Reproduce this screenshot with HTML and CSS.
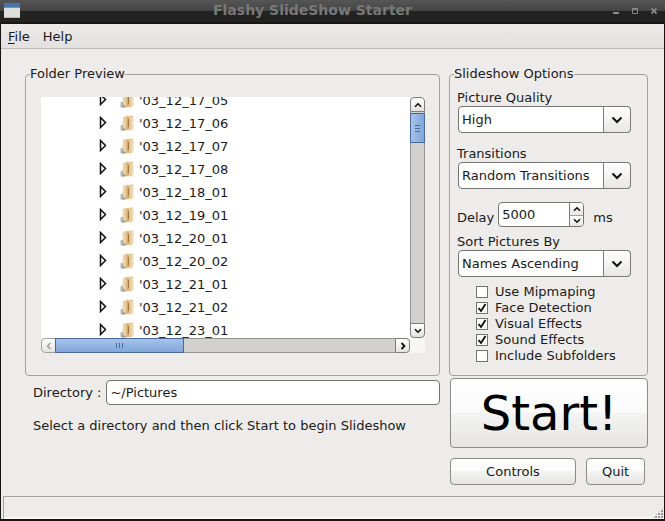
FILE: index.html
```html
<!DOCTYPE html>
<html lang="en">
<head>
<meta charset="utf-8">
<meta name="viewport" content="width=device-width, initial-scale=1">
<title>Flashy SlideShow Starter</title>
<link rel="stylesheet" href="styles.css">
</head>
<body>
<svg class="defs" aria-hidden="true">
  <defs>
    <linearGradient id="tan" x1="0" x2="1" y1="0" y2="0">
      <stop offset="0" stop-color="#f6e2ba"/><stop offset="1" stop-color="#dcb57a"/>
    </linearGradient>
    <linearGradient id="pale" x1="0" x2="1" y1="0" y2="0">
      <stop offset="0" stop-color="#d9ae6c"/><stop offset="1" stop-color="#f6e3bd"/>
    </linearGradient>
    <linearGradient id="steel" x1="0" x2="1" y1="0" y2="0">
      <stop offset="0" stop-color="#c4c4c2"/><stop offset="1" stop-color="#858583"/>
    </linearGradient>
    <symbol id="expander" viewBox="0 0 8 13"><path d="M1.500 1.500V11.500L6.500 6.500z" fill="#fff" stroke="#111" stroke-width="1.500"/></symbol>
    <symbol id="folder" viewBox="0 0 14 16">
      <path d="M7 1.500 12.500.5 13.200 1v12.500L11 15.200 7 14.500z" fill="url(#pale)" stroke="#dcc294" stroke-width=".4"/>
      <path d="M3 2.200 7.600 1v13.200L6.500 15.500 3 14z" fill="url(#tan)" stroke="#dcb981" stroke-width=".4"/>
      <path d="M7.800 3 9 4.500V11l-1.200 3z" fill="#9b7a48"/>
      <path d="M.5 10.200 2.600 9.500 3.400 13l2.600 1.400-2 1.300H1.500Q.4 15.500.4 14z" fill="url(#steel)"/>
    </symbol>
    <symbol id="chevron" viewBox="0 0 12 8"><path d="M1.500 1.500 6 6 10.500 1.500" fill="none" stroke="#111" stroke-width="2"/></symbol>
    <symbol id="down" viewBox="0 0 8 6"><path d="M1 1.200 4 4.200 7 1.200" fill="none" stroke="#111" stroke-width="1.600"/></symbol>
    <symbol id="up" viewBox="0 0 8 6"><path d="M1 4.800 4 1.800 7 4.800" fill="none" stroke="#111" stroke-width="1.600"/></symbol>
    <symbol id="left" viewBox="0 0 6 8"><path d="M4.500 1 1.500 4 4.500 7" fill="none" stroke="#999" stroke-width="1.400"/></symbol>
    <symbol id="right" viewBox="0 0 6 8"><path d="M1.500 1 4.500 4 1.500 7" fill="none" stroke="#111" stroke-width="1.800"/></symbol>
  </defs>
</svg>
<div class="window">
  <header class="titlebar">
    <svg class="app-icon" viewBox="0 0 16 15" aria-hidden="true">
      <rect width="16" height="15" fill="#dededc"/>
      <rect width="16" height="4" fill="#4674b0"/>
      <rect y="4" width="16" height="1" fill="#6f96c8"/>
      <rect y="14" width="16" height="1" fill="#a9bcd6"/>
    </svg>
    <h1 class="title">Flashy SlideShow Starter</h1>
    <div class="window-buttons">
      <button type="button" aria-label="Minimize"><svg viewBox="0 0 6 6"><path d="M0 5h6" stroke="#898989" stroke-width="2"/></svg></button>
      <button type="button" aria-label="Maximize"><svg viewBox="0 0 6 6"><path d="M.5 1v4.500h5V1z" fill="none" stroke="#898989"/><path d="M0 .8h6" stroke="#898989" stroke-width="1.600"/></svg></button>
      <button type="button" aria-label="Close"><svg viewBox="0 0 6 6"><path d="M.5.5l5 5M5.500.5l-5 5" stroke="#898989" stroke-width="1.900"/></svg></button>
    </div>
  </header>

  <nav class="menubar">
    <button type="button"><u>F</u>ile</button>
    <button type="button">Help</button>
  </nav>

  <main class="content">
    <div class="preview-column">
      <fieldset class="group folder-preview">
        <legend>Folder Preview</legend>
        <div class="scroll-area">
          <ul class="tree">
            <li><svg class="expander"><use href="#expander"/></svg><svg class="folder"><use href="#folder"/></svg>'03_12_17_05</li>
            <li><svg class="expander"><use href="#expander"/></svg><svg class="folder"><use href="#folder"/></svg>'03_12_17_06</li>
            <li><svg class="expander"><use href="#expander"/></svg><svg class="folder"><use href="#folder"/></svg>'03_12_17_07</li>
            <li><svg class="expander"><use href="#expander"/></svg><svg class="folder"><use href="#folder"/></svg>'03_12_17_08</li>
            <li><svg class="expander"><use href="#expander"/></svg><svg class="folder"><use href="#folder"/></svg>'03_12_18_01</li>
            <li><svg class="expander"><use href="#expander"/></svg><svg class="folder"><use href="#folder"/></svg>'03_12_19_01</li>
            <li><svg class="expander"><use href="#expander"/></svg><svg class="folder"><use href="#folder"/></svg>'03_12_20_01</li>
            <li><svg class="expander"><use href="#expander"/></svg><svg class="folder"><use href="#folder"/></svg>'03_12_20_02</li>
            <li><svg class="expander"><use href="#expander"/></svg><svg class="folder"><use href="#folder"/></svg>'03_12_21_01</li>
            <li><svg class="expander"><use href="#expander"/></svg><svg class="folder"><use href="#folder"/></svg>'03_12_21_02</li>
            <li><svg class="expander"><use href="#expander"/></svg><svg class="folder"><use href="#folder"/></svg>'03_12_23_01</li>
          </ul>
          <div class="scrollbar vertical">
            <button type="button" class="step first" aria-label="Scroll up"><svg class="arrow"><use href="#up"/></svg></button>
            <div class="track"><div class="thumb"><span class="grip"></span></div></div>
            <button type="button" class="step last" aria-label="Scroll down"><svg class="arrow"><use href="#down"/></svg></button>
          </div>
          <div class="scrollbar horizontal">
            <button type="button" class="step first" aria-label="Scroll left"><svg class="side-arrow"><use href="#left"/></svg></button>
            <div class="track"><div class="thumb"><span class="grip"></span></div></div>
            <button type="button" class="step last" aria-label="Scroll right"><svg class="side-arrow"><use href="#right"/></svg></button>
          </div>
        </div>
      </fieldset>
      <div class="directory">
        <label for="directory">Directory :</label>
        <input id="directory" class="field" type="text" value="~/Pictures">
      </div>
      <p class="hint">Select a directory and then click Start to begin Slideshow</p>
    </div>

    <div class="options-column">
      <fieldset class="group options">
        <legend>Slideshow Options</legend>
        <label for="quality">Picture Quality</label>
        <div class="combo">
          <select id="quality"><option>High</option></select>
          <span class="combo-arrow"><svg><use href="#chevron"/></svg></span>
        </div>
        <label class="spaced" for="transitions">Transitions</label>
        <div class="combo">
          <select id="transitions"><option>Random Transitions</option></select>
          <span class="combo-arrow"><svg><use href="#chevron"/></svg></span>
        </div>
        <div class="delay">
          <label for="delay">Delay</label>
          <div class="spinner">
            <input id="delay" type="text" inputmode="numeric" value="5000">
            <div class="spin-buttons">
              <button type="button" aria-label="Increase"><svg class="arrow"><use href="#up"/></svg></button>
              <button type="button" aria-label="Decrease"><svg class="arrow"><use href="#down"/></svg></button>
            </div>
          </div>
          <span class="unit">ms</span>
        </div>
        <label for="sort">Sort Pictures By</label>
        <div class="combo">
          <select id="sort"><option>Names Ascending</option></select>
          <span class="combo-arrow"><svg><use href="#chevron"/></svg></span>
        </div>
        <div class="checks">
          <label><input type="checkbox">Use Mipmaping</label>
          <label><input type="checkbox" checked>Face Detection</label>
          <label><input type="checkbox" checked>Visual Effects</label>
          <label><input type="checkbox" checked>Sound Effects</label>
          <label><input type="checkbox">Include Subfolders</label>
        </div>
      </fieldset>
      <button type="button" class="push start">Start!</button>
      <div class="actions">
        <button type="button" class="push controls">Controls</button>
        <button type="button" class="push quit">Quit</button>
      </div>
    </div>
  </main>

  <footer class="statusbar"><span class="resize-grip"></span></footer>
</div>
</body>
</html>
```
FILE: styles.css
```css
* {
  box-sizing: border-box;
}

body {
  margin: 0;
  background: #151313;
  color: #1a1a1a;
  font: 13px/16px "DejaVu Sans", sans-serif;
}

button,
input,
select {
  margin: 0;
  padding: 0;
  border: 0;
  border-radius: 0;
  background: none;
  color: inherit;
  font: inherit;
}

svg {
  display: block;
}

.defs {
  position: absolute;
  width: 0;
  height: 0;
}

.window {
  display: flex;
  flex-direction: column;
  min-height: 100vh;
  border: solid #151313;
  border-width: 0 1px 2px;
  background: #edecea;
}

/* Title bar */
.titlebar {
  display: grid;
  grid-template-columns: 60px 1fr 60px;
  height: 24px;
  margin: 0 -1px;
  padding: 0 8px 0 4px;
  background: linear-gradient(#555 0, #444 11px, #222 11px, #222 22px, #171717 22px);
}

.app-icon {
  width: 16px;
  height: 15px;
  margin-top: 3px;
}

.title {
  margin: 0;
  padding-right: 36px;
  color: #787878;
  font-size: 14px;
  line-height: 20px;
  text-align: center;
}

.window-buttons {
  display: flex;
  justify-content: flex-end;
  gap: 13px;
  padding-top: 8px;
}

.window-buttons svg {
  width: 6px;
  height: 6px;
}

.window-buttons button {
  height: 6px;
}

/* Menu bar */
.menubar {
  display: flex;
  gap: 13px;
  height: 25px;
  padding: 1px 7px 0;
  border-bottom: 1px solid #bebdbb;
  background: linear-gradient(#ecebea, #e2e1df);
}

.menubar u {
  text-underline-offset: 2px;
}

/* Main area */
.content {
  display: grid;
  grid-template-columns: 1fr 199px;
  flex: 1;
  gap: 9px;
  padding: 17px 16px 10px 24px;
}

.preview-column,
.options-column {
  display: flex;
  flex-direction: column;
}

.group {
  display: flex;
  flex-direction: column;
  min-width: 0;
  height: 310px;
  margin: 0;
  border: 1px solid #a3a29f;
  border-radius: 4px;
}

.group legend {
  height: 16px;
  padding: 0;
}

.folder-preview {
  padding: 15px 14px 22px 15px;
}

.folder-preview legend {
  margin-left: -11px;
}

.scroll-area {
  display: grid;
  grid-template: minmax(0, 1fr) 15px / minmax(0, 1fr) 15px;
  height: 256px;
  background: #f7f7f5;
}

.tree {
  margin: 0;
  padding: 0;
  overflow: hidden;
  background: #fff;
  list-style: none;
}

.tree li {
  display: flex;
  align-items: center;
  height: 23px;
  padding-left: 58px;
}

.tree li:first-child {
  margin-top: -8px;
}

.expander {
  width: 8px;
  height: 13px;
  margin: 0 13px 3px 0;
}

.folder {
  width: 14px;
  height: 16px;
  margin: 0 5px 1px 0;
}

/* Scroll bars */
.scrollbar {
  display: flex;
}

.vertical {
  flex-direction: column;
}

.step {
  display: grid;
  place-items: center;
  width: 15px;
  height: 15px;
  border: 1px solid #7e7d7b;
  background: linear-gradient(#fff, #e4e3e1);
}

.vertical .first {
  border-radius: 4px 4px 0 0;
}

.vertical .last {
  border-radius: 0 0 4px 4px;
}

.horizontal .first {
  border-color: #a3a29f;
  border-radius: 4px 0 0 4px;
}

.horizontal .last {
  border-radius: 0 4px 4px 0;
}

.arrow {
  width: 8px;
  height: 6px;
}

.side-arrow {
  width: 6px;
  height: 8px;
}

.track {
  flex: 1;
  border: solid #969593;
  background: #d2d1cf;
}

.vertical .track {
  padding-top: 1px;
  border-width: 0 1px;
}

.horizontal .track {
  border-width: 1px 0;
}

.thumb {
  display: grid;
  place-items: center;
  border: 1px solid #49699a;
}

.vertical .thumb {
  height: 30px;
  margin: 0 -1px;
  background: linear-gradient(90deg, #a5c3ea, #80a6da);
}

.horizontal .thumb {
  width: 38%;
  height: 15px;
  margin: -1px 0 -1px -1px;
  background: linear-gradient(#a5c3ea, #80a6da);
}

.vertical .grip {
  width: 5px;
  height: 7px;
  background: repeating-linear-gradient(#49699a 0 1px, transparent 1px 3px);
}

.horizontal .grip {
  width: 7px;
  height: 5px;
  background: repeating-linear-gradient(90deg, #49699a 0 1px, transparent 1px 3px);
}

/* Directory */
.directory {
  display: flex;
  align-items: center;
  gap: 5px;
  margin-top: 4px;
  padding-left: 8px;
}

.field {
  flex: 1;
  min-width: 0;
  height: 25px;
  padding: 0 3px;
  border: 1px solid #757472;
  border-radius: 4px;
  background: #fff;
}

.hint {
  margin: 13px 0 0 8px;
}

/* Options */
.options {
  padding: 8px 16px 0 7px;
}

.options legend {
  margin-left: -3px;
}

.spaced {
  margin-top: 13px;
}

.combo {
  display: grid;
  height: 27px;
  margin-left: 1px;
}

.combo select,
.combo-arrow {
  grid-area: 1 / 1;
}

.combo select {
  appearance: none;
  padding: 0 30px 0 3px;
  border: 1px solid #757472;
  border-radius: 4px;
  background: #fff;
}

.combo-arrow {
  display: grid;
  place-items: center;
  justify-self: end;
  width: 28px;
  border: 1px solid #7e7d7b;
  border-radius: 0 4px 4px 0;
  background: linear-gradient(#fff, #e8e7e5);
  pointer-events: none;
}

.combo-arrow svg {
  width: 12px;
  height: 8px;
}

.delay {
  display: flex;
  align-items: center;
  margin: 13px 0 7px;
}

.delay > label,
.unit {
  padding-top: 6px;
}

.spinner {
  display: flex;
  width: 86px;
  height: 25px;
  margin: 0 9px 0 4px;
  border: 1px solid #757472;
  border-radius: 4px;
  overflow: hidden;
  background: #fff;
}

.spinner input {
  flex: 1;
  min-width: 0;
  padding-left: 3px;
}

.spin-buttons {
  display: grid;
  grid-template-rows: 1fr 1fr;
  width: 14px;
  border-left: 1px solid #7e7d7b;
}

.spin-buttons button {
  display: grid;
  place-items: center;
  background: linear-gradient(#fff, #e8e7e5);
}

.spin-buttons button + button {
  border-top: 1px solid #a3a29f;
}

.checks {
  display: grid;
  margin: 7px 0 0 19px;
}

.checks label {
  display: flex;
  align-items: center;
  gap: 7px;
}

.checks input {
  appearance: none;
  width: 12px;
  height: 12px;
  border: 1px solid #757472;
  background: #fff;
}

.checks input:checked {
  background: #fff url("data:image/svg+xml,%3Csvg xmlns='http://www.w3.org/2000/svg' viewBox='0 0 10 10'%3E%3Cpath d='M1.500 5 4 8 8.500 1' fill='none' stroke='%23111' stroke-width='1.900'/%3E%3C/svg%3E") center / 10px 10px no-repeat;
}

/* Push buttons */
.push {
  height: 27px;
  border: 1px solid #8c8b89;
  border-radius: 4px;
  background: linear-gradient(#fff, #fafafa 49%, #f4f4f3 50%, #e6e5e3);
}

.start {
  height: 70px;
  margin: 2px 0 0 1px;
  color: #000;
  font-size: 48px;
  line-height: 56px;
}

.actions {
  display: flex;
  gap: 10px;
  margin: 10px 3px 0 1px;
}

.controls {
  flex: 1;
}

.quit {
  width: 59px;
}

/* Status bar */
.statusbar {
  display: flex;
  align-items: flex-end;
  justify-content: flex-end;
  height: 23px;
  margin-left: 2px;
  border: solid #a3a29f;
  border-width: 1px 0 0 1px;
  box-shadow: inset 0 -2px #f9f9f8;
}

.resize-grip {
  width: 12px;
  height: 12px;
  background: radial-gradient(circle at 1px 1px, #999 1px, transparent 1px) 0 0 / 3px 3px;
  clip-path: polygon(100% 0, 100% 100%, 0 100%);
}
```
